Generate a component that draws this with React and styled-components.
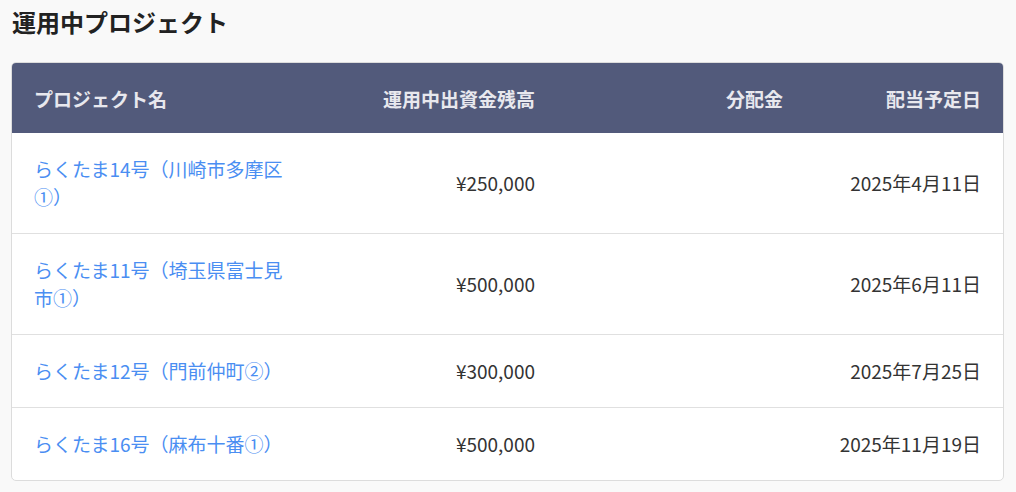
import React from 'react'
import styled, { createGlobalStyle } from 'styled-components'

const Global = createGlobalStyle`
body{
    margin: 0;
    background-color: #f9f9f9;
    font-family: "Noto Sans CJK JP", "Noto Sans", sans-serif;
    color: #333;
}
`
const Page = styled.div`
padding: 4px 12px 0 11px;
`
const Title = styled.h2`
margin: 0 0 22px 1px;
font-size: 24px;
line-height: 36px;
font-weight: 700;
color: #222;
`
const Card = styled.div`
background: #fff;
border: 1px solid #dcdcdc;
border-radius: 5px;
overflow: hidden;
`
const Row = styled.div`
display: grid;
grid-template-columns: 296px 249px 248px 1fr;
border-top: ${p => (p.$first ? 'none' : '1px solid #e0e0e0')};
`
const Head = styled(Row)`
background-color: #525a7b;
height: 70px;
align-items: center;
`
const HeadCell = styled.div`
padding: 0 22px;
font-size: 19px;
font-weight: 700;
color: #e8e8ee;
text-align: ${p => p.$align || 'left'};
`
const Cell = styled.div`
padding: 22px;
font-size: 19px;
line-height: 28px;
display: flex;
align-items: center;
justify-content: ${p => (p.$align === 'right' ? 'flex-end' : 'flex-start')};
text-align: ${p => p.$align || 'left'};
`
const Link = styled.a`
color: #4a8ef2;
text-decoration: none;
`

const rows = [
    { name: 'らくたま14号（川崎市多摩区①）', amount: '¥250,000', date: '2025年4月11日' },
    { name: 'らくたま11号（埼玉県富士見市①）', amount: '¥500,000', date: '2025年6月11日' },
    { name: 'らくたま12号（門前仲町②）', amount: '¥300,000', date: '2025年7月25日' },
    { name: 'らくたま16号（麻布十番①）', amount: '¥500,000', date: '2025年11月19日' },
]

const App = () => {
    return (
        <>
            <Global />
            <Page>
                <Title>運用中プロジェクト</Title>
                <Card>
                    <Head $first>
                        <HeadCell>プロジェクト名</HeadCell>
                        <HeadCell $align="right">運用中出資金残高</HeadCell>
                        <HeadCell $align="right">分配金</HeadCell>
                        <HeadCell $align="right">配当予定日</HeadCell>
                    </Head>
                    {rows.map((r, i) => (
                        <Row key={i} $first={i === 0}>
                            <Cell><Link href="#">{r.name}</Link></Cell>
                            <Cell $align="right">{r.amount}</Cell>
                            <Cell $align="right"></Cell>
                            <Cell $align="right">{r.date}</Cell>
                        </Row>
                    ))}
                </Card>
            </Page>
        </>
    )
}

export default App
